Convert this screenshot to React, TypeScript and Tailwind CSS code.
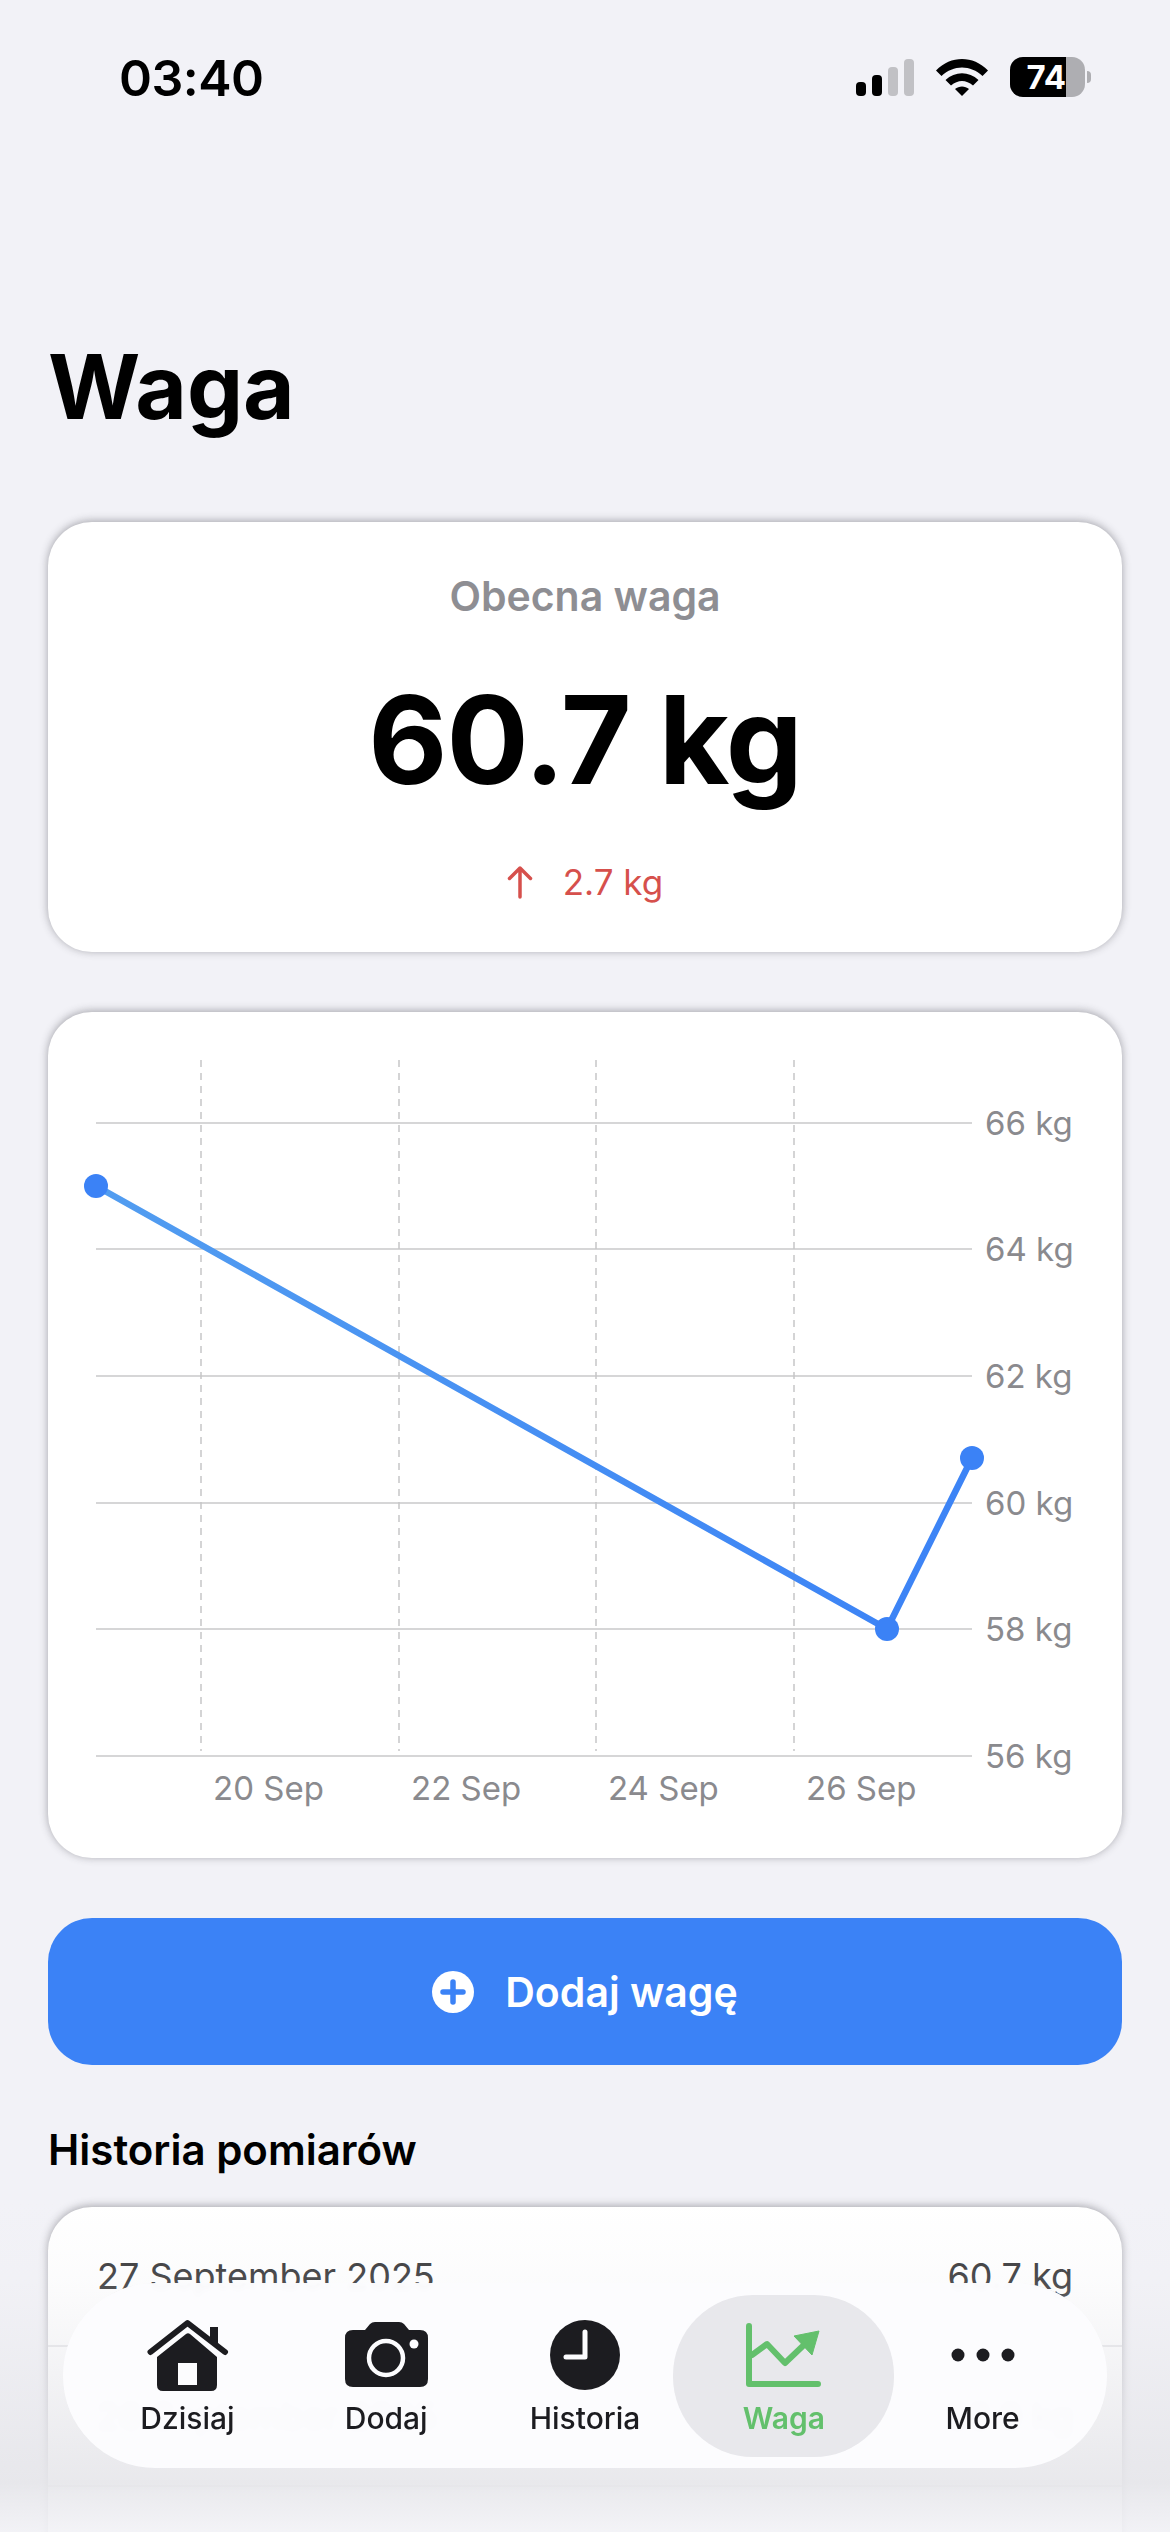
const hLines = [
  { y: 1124, label: "66 kg" },
  { y: 1250, label: "64 kg" },
  { y: 1377, label: "62 kg" },
  { y: 1504, label: "60 kg" },
  { y: 1630, label: "58 kg" },
  { y: 1757, label: "56 kg" },
]

const vLines = [
  { x: 201, label: "20 Sep" },
  { x: 399, label: "22 Sep" },
  { x: 596, label: "24 Sep" },
  { x: 794, label: "26 Sep" },
]

function StatusBar() {
  return (
    <div className="flex h-[155px] items-start justify-between pl-[119px] pr-[79px] pt-[50px]">
      <span className="text-[50px] font-semibold leading-[56px] tracking-[-0.5px] text-black">03:40</span>
      <div className="flex items-center gap-[22px] pt-[7px]">
        <svg width="58" height="37" viewBox="0 0 58 37">
          <rect x="0" y="23" width="10" height="14" rx="4" fill="#000" />
          <rect x="16" y="16" width="10" height="21" rx="4" fill="#000" />
          <rect x="32" y="8" width="10" height="29" rx="4" fill="#c1c1c5" />
          <rect x="48" y="0" width="10" height="37" rx="4" fill="#c1c1c5" />
        </svg>
        <svg width="52" height="37" viewBox="0 0 52 37">
          <path d="M0 11.5 C15 -3.8 37 -3.8 52 11.5 L46.5 17 C34.5 5.5 17.5 5.5 5.5 17 Z" fill="#000" />
          <path d="M9.5 21 C19 12 33 12 42.5 21 L37 26.5 C30 20.5 22 20.5 15 26.5 Z" fill="#000" />
          <path d="M19 30 C23 26.5 29 26.5 33 30 L26 37 Z" fill="#000" />
        </svg>
        <div className="flex items-center gap-[2px]">
          <div className="relative flex h-[40px] w-[75px] items-center overflow-hidden rounded-[13px] bg-[#aeaeb2]">
            <div className="flex h-full w-[56px] items-center justify-end bg-black">
              <span className="text-[33px] font-bold leading-none text-white">74</span>
            </div>
          </div>
          <div className="h-[12px] w-[4px] rounded-r-full bg-[#aeaeb2]" />
        </div>
      </div>
    </div>
  )
}

function WeightCard() {
  return (
    <div className="flex h-[430px] flex-col items-center rounded-[44px] bg-white pt-[50px] shadow-[0_-1px_8px_rgba(50,50,60,0.42)]">
      <span className="text-[41px] font-semibold leading-[48px] text-[#8e8e93]">Obecna waga</span>
      <span className="mt-[45px] text-[122px] font-bold leading-[150px] tracking-[-1px] text-black">60.7 kg</span>
      <div className="mt-[45px] flex items-center gap-[30px] text-[#d6504c]">
        <svg width="26" height="34" viewBox="0 0 26 34" fill="none" stroke="currentColor" strokeWidth="3.5" strokeLinecap="round" strokeLinejoin="round">
          <path d="M13 32V3M2.5 13.5 13 3l10.500 10.500" />
        </svg>
        <span className="text-[35px] leading-[44px]">2.7 kg</span>
      </div>
    </div>
  )
}

function WeightChart() {
  return (
    <div className="h-[846px] rounded-[44px] bg-white shadow-[0_-1px_8px_rgba(50,50,60,0.42)]">
      <svg width="1074" height="846" viewBox="48 1013 1074 846" fontFamily="Inter, sans-serif">
        <defs>
          <linearGradient id="line" gradientUnits="userSpaceOnUse" x1="96" y1="1187" x2="972" y2="1630">
            <stop offset="0" stopColor="#529df0" />
            <stop offset="1" stopColor="#3b82f6" />
          </linearGradient>
        </defs>
        {hLines.map((l) => (
          <g key={l.y}>
            <line x1="96" x2="972" y1={l.y} y2={l.y} stroke="#c8c8ca" strokeWidth="1.5" />
            <text x="985" y={l.y + 12} fontSize="33" fill="#8a8a8e">{l.label}</text>
          </g>
        ))}
        {vLines.map((l) => (
          <g key={l.x}>
            <line x1={l.x} x2={l.x} y1="1061" y2="1752" stroke="#c6c6c8" strokeWidth="1.5" strokeDasharray="7 6" />
            <text x={l.x + 12} y="1801" fontSize="33" fill="#8a8a8e">{l.label}</text>
          </g>
        ))}
        <polyline points="96,1187 887,1630 972,1459" fill="none" stroke="url(#line)" strokeWidth="6.5" strokeLinejoin="round" />
        <circle cx="96" cy="1187" r="12" fill="#3b82f6" />
        <circle cx="887" cy="1630" r="12" fill="#3b82f6" />
        <circle cx="972" cy="1459" r="12" fill="#3b82f6" />
      </svg>
    </div>
  )
}

function AddButton() {
  return (
    <button className="flex h-[147px] items-center justify-center gap-[31px] rounded-[44px] bg-[#3b82f6] text-white">
      <svg width="42" height="42" viewBox="0 0 42 42">
        <circle cx="21" cy="21" r="21" fill="#fff" />
        <path d="M21 11v20M11 21h20" stroke="#3b82f6" strokeWidth="5.500" strokeLinecap="round" />
      </svg>
      <span className="text-[41px] font-semibold leading-[50px]">Dodaj wagę</span>
    </button>
  )
}

function HistoryRow({ date, weight }: { date: string; weight: string }) {
  return (
    <div className="flex h-[140px] items-center justify-between border-b-2 border-[#e4e4e7] px-[49px] text-[36px] text-[#2c2c2e]">
      <span>{date}</span>
      <span>{weight}</span>
    </div>
  )
}

function HomeIcon() {
  return (
    <svg width="83" height="72" viewBox="0 0 83 72">
      <path d="M64 8h8v17h-8z" fill="#1c1c20" />
      <path d="M4.500 33 41.500 4 79 33" fill="none" stroke="#1c1c20" strokeWidth="6" strokeLinecap="round" strokeLinejoin="round" />
      <path fillRule="evenodd" d="M11 38 40 15q2-1.500 4 0L71 38v28q0 6-6 6H17q-6 0-6-6ZM32 44v22h19V44Z" fill="#1c1c20" />
    </svg>
  )
}

function CameraIcon() {
  return (
    <svg width="83" height="65" viewBox="0 0 83 65">
      <path d="M8 8H20L25 2Q27 0 30 0H54Q57 0 59 2L64 8H75Q83 8 83 16V57Q83 65 75 65H8Q0 65 0 57V16Q0 8 8 8Z" fill="#1c1c20" />
      <circle cx="41" cy="36" r="17" fill="none" stroke="#fcfcfe" strokeWidth="4.500" />
      <circle cx="69" cy="22" r="4.500" fill="#fcfcfe" />
    </svg>
  )
}

function ClockIcon() {
  return (
    <svg width="70" height="70" viewBox="0 0 70 70">
      <circle cx="35" cy="35" r="35" fill="#1c1c20" />
      <path d="M35 12v25H16" fill="none" stroke="#fcfcfe" strokeWidth="5" strokeLinecap="round" strokeLinejoin="round" />
    </svg>
  )
}

function TrendIcon() {
  return (
    <svg width="75" height="64" viewBox="0 0 75 64">
      <path d="M3 3v58h69" fill="none" stroke="#63c06c" strokeWidth="6" strokeLinecap="round" strokeLinejoin="round" />
      <path d="M6 32 21 21 39 40 60 20" fill="none" stroke="#63c06c" strokeWidth="6" strokeLinecap="round" strokeLinejoin="round" />
      <path d="M48 13 73 8 66 32Z" fill="#63c06c" stroke="#63c06c" strokeWidth="1" strokeLinejoin="round" />
    </svg>
  )
}

function MoreIcon() {
  return (
    <svg width="64" height="14" viewBox="0 0 64 14">
      <circle cx="7" cy="7" r="6.500" fill="#1c1c20" />
      <circle cx="32" cy="7" r="6.500" fill="#1c1c20" />
      <circle cx="57" cy="7" r="6.500" fill="#1c1c20" />
    </svg>
  )
}

function TabItem({ label, active, children }: { label: string; active?: boolean; children: React.ReactNode }) {
  return (
    <div className="relative flex h-[162px] flex-col items-center">
      {active && <div className="absolute -inset-x-[11px] inset-y-0 rounded-[80px] bg-[#e8e8ec]" />}
      <div className="relative flex h-[96px] items-center pt-[24px]">{children}</div>
      <span className={`relative mt-[10px] text-[30px] leading-[34px] ${active ? "font-semibold text-[#63c06c]" : "font-medium text-[#1c1c20]"}`}>
        {label}
      </span>
    </div>
  )
}

function TabBar() {
  return (
    <div className="absolute left-[63px] top-[2283px] grid h-[185px] w-[1044px] grid-cols-5 items-center rounded-[92px] bg-[#fcfcfe]/[0.97] px-[25px] backdrop-blur-[3px]">
      <TabItem label="Dzisiaj"><HomeIcon /></TabItem>
      <TabItem label="Dodaj"><CameraIcon /></TabItem>
      <TabItem label="Historia"><ClockIcon /></TabItem>
      <TabItem label="Waga" active><TrendIcon /></TabItem>
      <TabItem label="More"><MoreIcon /></TabItem>
    </div>
  )
}

export default function App() {
  return (
    <div className="relative h-[2532px] w-[1170px] overflow-hidden bg-[#f2f2f7] font-['Inter',sans-serif]">
      <StatusBar />
      <h1 className="pl-[48px] pt-[177px] text-[89px] font-bold leading-[110px] text-black">Waga</h1>
      <div className="mt-[80px] flex flex-col gap-[60px] px-[48px]">
        <WeightCard />
        <WeightChart />
        <AddButton />
      </div>
      <h2 className="mt-[60px] pl-[48px] text-[42px] font-semibold leading-[50px] text-black">Historia pomiarów</h2>
      <div className="mx-[48px] mt-[32px] h-[400px] rounded-t-[44px] bg-white shadow-[0_-1px_8px_rgba(50,50,60,0.42)]">
        <HistoryRow date="27 September 2025" weight="60.7 kg" />
        <HistoryRow date="26 September 2025" weight="58.0 kg" />
      </div>
      <div className="absolute inset-x-0 bottom-0 h-[330px] bg-[linear-gradient(to_bottom,rgba(242,242,247,0)_0%,rgba(236,236,240,0.18)_25%,rgba(230,230,234,0.9)_85%,rgba(242,242,246,0.9)_100%)]" />
      <TabBar />
    </div>
  )
}
